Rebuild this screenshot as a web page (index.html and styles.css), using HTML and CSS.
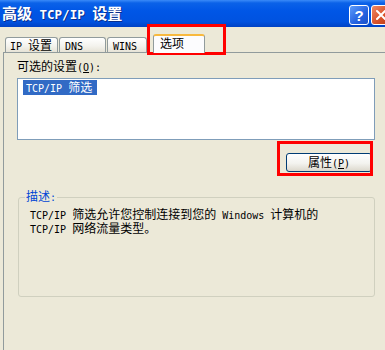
FILE: index.html
```html
<!DOCTYPE html>
<html lang="zh-CN">
<head>
<meta charset="utf-8">
<title>高级 TCP/IP 设置</title>
<link rel="stylesheet" href="styles.css">
</head>
<body>
<div class="titlebar">
  <span class="title">高级<span class="lt"> TCP/IP </span>设置</span>
  <div class="tb-buttons">
    <span class="tb help">?</span>
    <span class="tb close"><svg width="12" height="12" viewBox="0 0 12 12"><path d="M2 2 L10 10 M10 2 L2 10" stroke="#fff" stroke-width="2" stroke-linecap="round"/></svg></span>
  </div>
</div>
<div class="tabs">
  <div class="tab t1"><span class="l">IP </span>设置</div>
  <div class="tab t2"><span class="l">DNS</span></div>
  <div class="tab t3"><span class="l">WINS</span></div>
  <div class="tab sel">选项</div>
</div>
<div class="panel">
  <div class="label">可选的设置<span class="l">(<u>O</u>):</span></div>
  <div class="listbox"><span class="item"><span class="l">TCP/IP </span>筛选</span></div>
  <div class="btnrow"><button class="btn">属性<span class="l">(<u>P</u>)</span></button></div>
  <fieldset class="group">
    <legend>描述<span class="l">:</span></legend>
    <div class="desc">
      <div class="line"><span class="l">TCP/IP </span>筛选允许您控制连接到您的<span class="l"> Windows </span>计算机的</div>
      <div class="line"><span class="l">TCP/IP </span>网络流量类型。</div>
    </div>
  </fieldset>
</div>
<div class="mark m1"></div>
<div class="mark m2"></div>
</body>
</html>
```
FILE: styles.css
```css
* { box-sizing: border-box; }
body {
  margin: 0;
  width: 385px;
  height: 350px;
  overflow: hidden;
  position: relative;
  background: #ECE9D8;
  color: #000;
  font-family: "Noto Sans CJK SC", sans-serif;
  font-size: 12px;
  line-height: 13px;
}
.l { font-family: "DejaVu Sans Mono", monospace; font-size: 10px; }

.titlebar {
  height: 27px;
  display: flex;
  align-items: center;
  padding-left: 2px;
  background: linear-gradient(180deg, #3A8AF8 0, #0B62E8 3px, #0056E6 40%, #0052E0 80%, #0042C4 100%);
}
.title {
  flex: 1;
  color: #fff;
  font-weight: bold;
  font-size: 15px;
  line-height: 17px;
  white-space: nowrap;
  text-shadow: 1px 1px 0 #0A2F8C;
}
.title .lt { font-family: "DejaVu Sans Mono", monospace; font-size: 12.5px; font-weight: bold; }
.tb-buttons {
  display: flex;
  gap: 2px;
  flex-shrink: 0;
  margin-right: -6px;
  align-self: flex-start;
  margin-top: 5px;
}
.tb {
  width: 20px;
  height: 20px;
  border: 1px solid #fff;
  border-radius: 3px;
  display: flex;
  align-items: center;
  justify-content: center;
}
.help {
  background: linear-gradient(135deg, #5C9CFB, #2562E0 60%, #1B50C8);
  color: #fff;
  font: bold 15px/1 "Liberation Sans", sans-serif;
}
.close {
  background: linear-gradient(135deg, #EE8A66, #D9532B 55%, #B93C17);
}

.tabs {
  display: flex;
  align-items: flex-end;
  height: 25px;
  padding-left: 5px;
}
.tab {
  height: 15px;
  border: 1px solid #919B9C;
  border-bottom: none;
  border-radius: 3px 3px 0 0;
  background: linear-gradient(180deg, #FFFFFF, #F4F3EE 55%, #E6E3D6);
  line-height: 14px;
  white-space: nowrap;
}
.t1 { width: 53px; padding-left: 4px; margin-right: 1px; }
.t2 { width: 47px; padding-left: 5px; margin-right: 1px; }
.t3 { width: 40px; padding-left: 5px; margin-right: 6px; }
.sel {
  width: 52px;
  height: 19px;
  padding-left: 6px;
  margin-bottom: -1px;
  background: #FCFCFE;
  border-top: 2px solid #F8B93E;
  position: relative;
  z-index: 1;
}

.panel {
  margin-left: 3px;
  height: 300px;
  border-left: 1px solid #919B9C;
  border-top: 1px solid #919B9C;
  padding: 7px 0 0 13px;
}
.label { height: 12px; line-height: 12px; margin-bottom: 6px; white-space: nowrap; }
.listbox {
  width: 358px;
  height: 62px;
  border: 1px solid #7F9DB9;
  background: #fff;
  padding: 1px 0 0 5px;
}
.item {
  display: inline-block;
  background: #316AC5;
  color: #fff;
  line-height: 13px;
  padding: 0 5px 0 3px;
}
.btnrow {
  width: 358px;
  display: flex;
  justify-content: flex-end;
  padding-right: 3px;
  margin-top: 13px;
}
.btn {
  width: 86px;
  height: 19px;
  padding: 0;
  border: 1px solid #003C74;
  border-radius: 3px;
  background: linear-gradient(180deg, #FFFFFF, #F3F3EF 55%, #DCD8CC);
  font-family: "Noto Sans CJK SC", sans-serif;
  font-size: 12px;
  line-height: 15px;
  color: #000;
}
.group {
  margin: 18px 0 0 1px;
  width: 357px;
  padding: 3px 0 61px 6px;
  border: 1px solid #D0D0BF;
  border-radius: 3px;
  min-width: 0;
}
.group legend {
  padding: 0 1px;
  line-height: 12px;
  color: #0046D5;
}
.desc {
  margin-left: 5px;
  display: flex;
  flex-direction: column;
}
.line {
  height: 14px;
  line-height: 14px;
  white-space: nowrap;
}

.mark {
  position: absolute;
  border: 3px solid #FF0000;
}
.m1 { left: 147px; top: 24px; width: 79px; height: 31px; }
.m2 { left: 277px; top: 141px; width: 96px; height: 35px; }
```
